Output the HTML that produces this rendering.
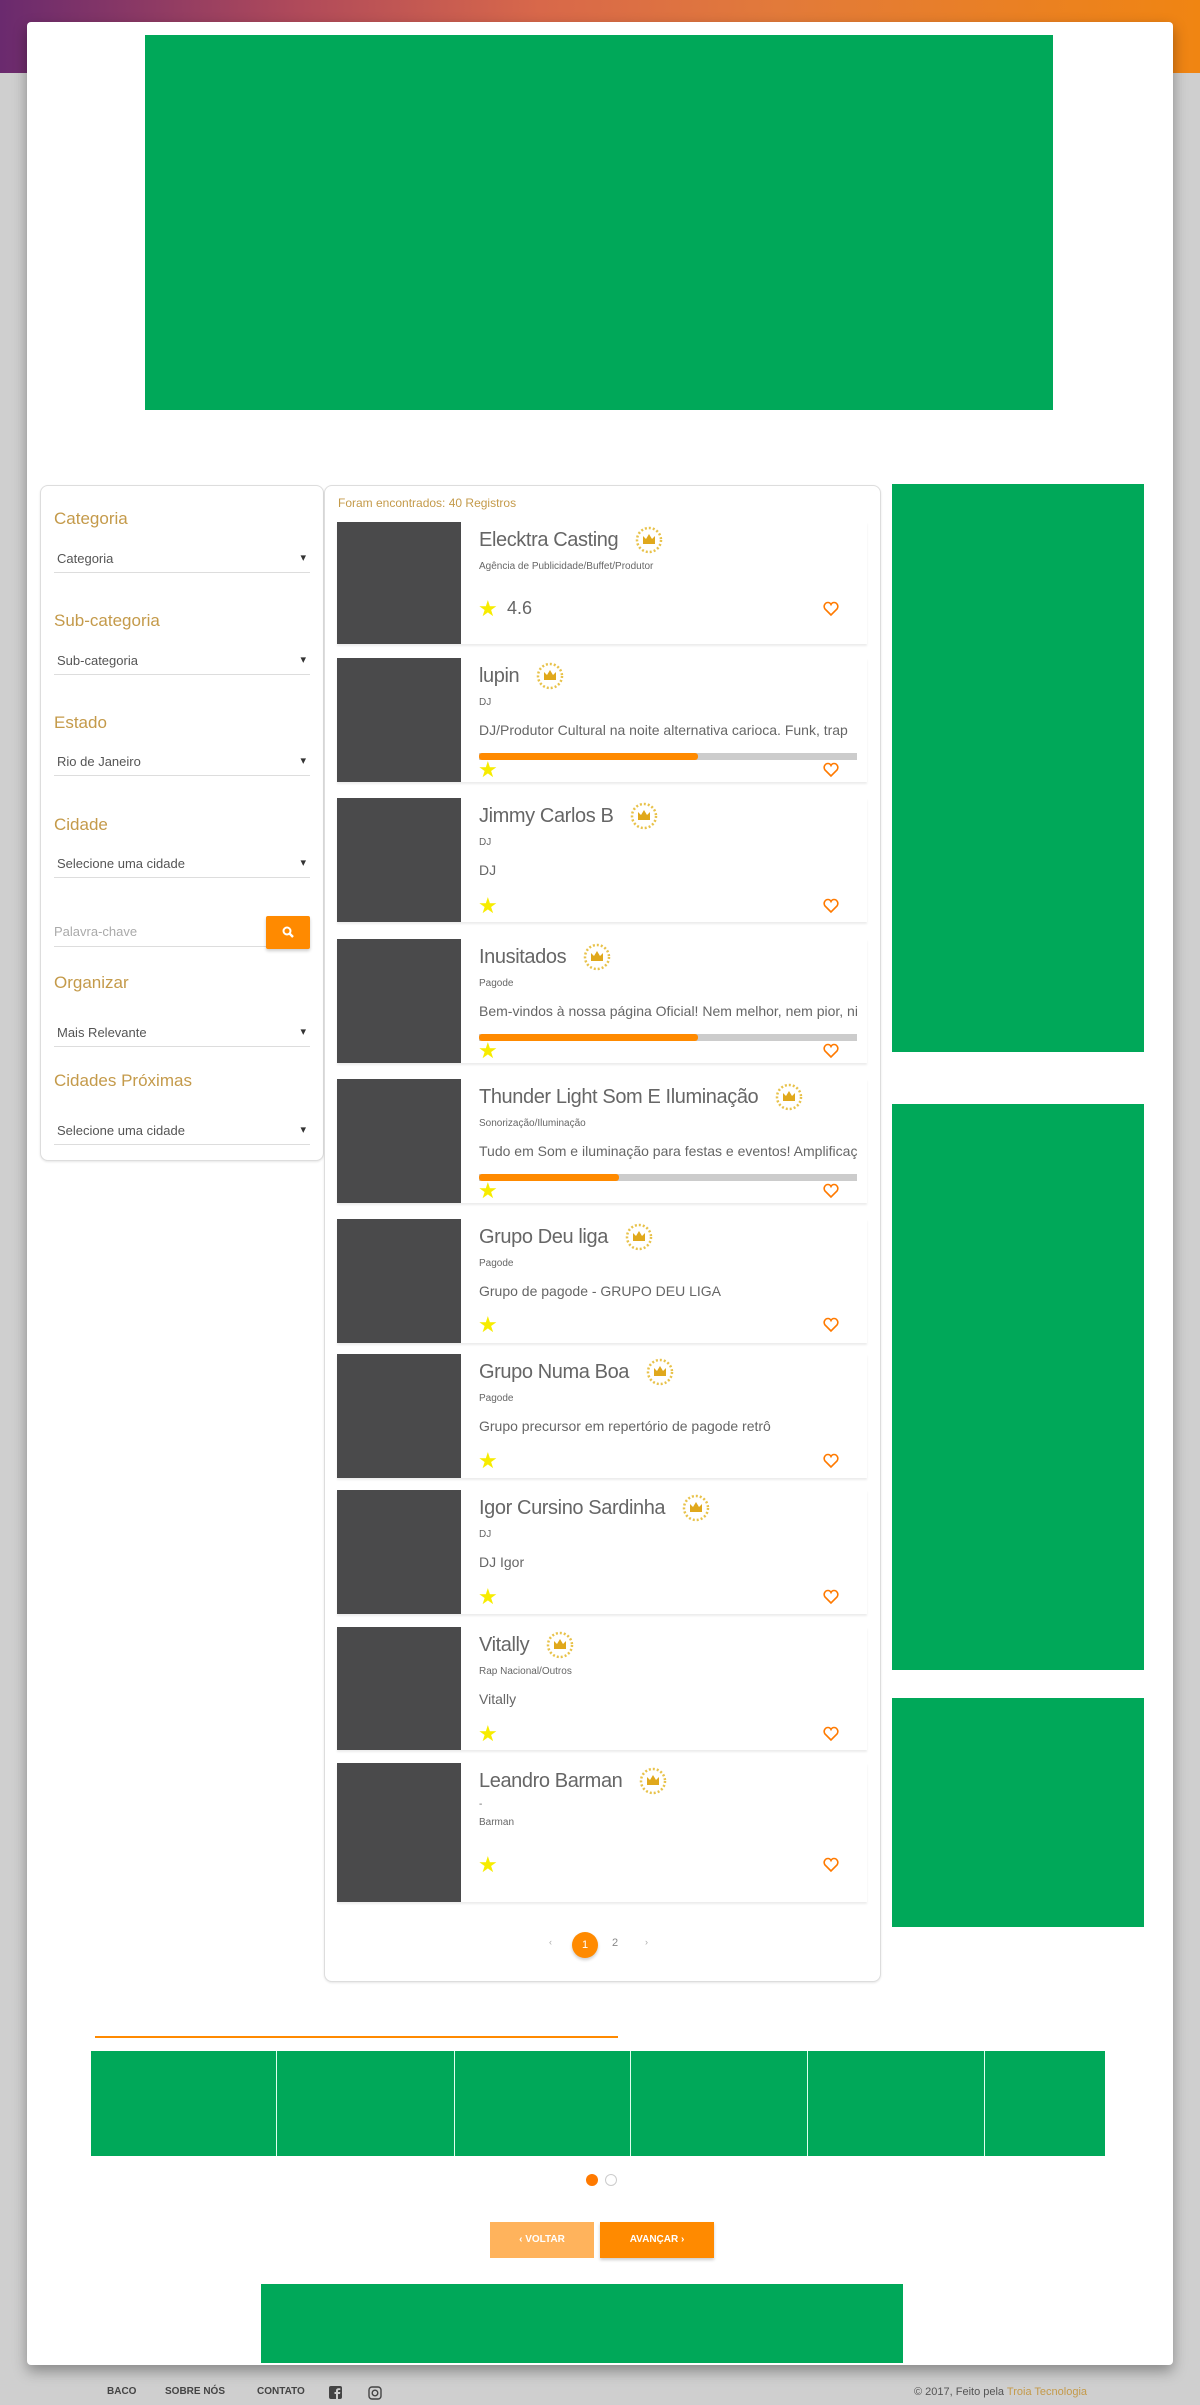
<!DOCTYPE html>
<html><head><meta charset="utf-8"><style>
*{margin:0;padding:0;box-sizing:border-box}
body{width:1200px;height:2405px;background:#cfcfcf;position:relative;font-family:"Liberation Sans",sans-serif;overflow:hidden}
.a{position:absolute}
.grad{left:0;top:0;width:1200px;height:73px;background:linear-gradient(90deg,#6a2a6e 0%,#b04a5a 25%,#d8684a 45%,#e27a3a 65%,#f08512 100%)}
.card{left:27px;top:22px;width:1146px;height:2343px;background:#fff;border-radius:4px;box-shadow:0 6px 14px rgba(0,0,0,.35)}
.green{background:#00a859}
.panel{background:#fff;border:1px solid #ddd;border-radius:8px;box-shadow:0 1px 2px rgba(0,0,0,.1)}
.lbl{color:#c49a4a;font-size:17px;left:54px}
.sel{left:54px;width:256px;height:22px;border-bottom:1px solid #ddd;font-size:13px;color:#555;padding-left:3px}
.sel:after{content:"▾";position:absolute;right:4px;top:0;font-size:11px;color:#333}
.item{left:337px;width:530px;background:#fff;box-shadow:0 2px 2px rgba(0,0,0,.08)}
.img{left:0;top:0;width:124px;background:#4a4a4b}
.t{left:142px;font-size:20px;letter-spacing:-0.4px;color:#666;white-space:nowrap;line-height:30px;display:flex;align-items:center}
.t svg{margin-left:16px;flex:none}
.s{left:142px;font-size:10px;color:#666}
.d{left:142px;font-size:14px;color:#666;white-space:nowrap;width:378px;overflow:hidden}
.bar{left:142px;width:378px;height:7px;background:#ccc}
.bar i{display:block;height:7px;background:#ff8a00;border-radius:3px}
.st{left:141px;color:#f7ec00;font-size:22px;line-height:1}
.ht{left:486px}
.foot{top:2386px;font-size:10px;font-weight:bold;color:#444}
</style></head><body>
<div class="a grad"></div>
<div class="a card"></div>
<div class="a green" style="left:145px;top:35px;width:908px;height:375px"></div>

<div class="a panel" style="left:40px;top:485px;width:284px;height:676px"></div>
<div class="a lbl" style="top:509px">Categoria</div>
<div class="a sel" style="top:551px">Categoria</div>
<div class="a lbl" style="top:611px">Sub-categoria</div>
<div class="a sel" style="top:653px">Sub-categoria</div>
<div class="a lbl" style="top:713px">Estado</div>
<div class="a sel" style="top:754px">Rio de Janeiro</div>
<div class="a lbl" style="top:815px">Cidade</div>
<div class="a sel" style="top:856px">Selecione uma cidade</div>
<div class="a" style="left:54px;top:924px;width:212px;height:23px;border-bottom:1px solid #ddd;font-size:13px;color:#aaa">Palavra-chave</div>
<div class="a" style="left:266px;top:916px;width:44px;height:33px;background:#ff8a00;border-radius:2px;box-shadow:0 2px 3px rgba(0,0,0,.2)">
<svg width="44" height="33" viewBox="0 0 44 33"><circle cx="21" cy="15" r="3.5" fill="none" stroke="#fff" stroke-width="2"/><path d="M23.5 17.5l3.5 3.5" stroke="#fff" stroke-width="2.4"/></svg></div>
<div class="a lbl" style="top:973px">Organizar</div>
<div class="a sel" style="top:1025px">Mais Relevante</div>
<div class="a lbl" style="top:1071px">Cidades Próximas</div>
<div class="a sel" style="top:1123px">Selecione uma cidade</div>

<div class="a panel" style="left:324px;top:485px;width:557px;height:1497px"></div>
<div class="a" style="left:338px;top:496px;font-size:12px;color:#c49a4a">Foram encontrados: 40 Registros</div>

<svg width="0" height="0" style="position:absolute"><defs>
<g id="crown"><circle cx="15" cy="15" r="12" fill="none" stroke="#e8c24a" stroke-width="2.5" stroke-dasharray="2 2"/><path d="M9 19 L9 11 L12 14 L15 9 L18 14 L21 11 L21 19Z" fill="#e0a81c"/></g>
<g id="heart"><path d="M8 14 L2 8 C0 5 2 1.5 5 1.5 C6.5 1.5 7.5 2.5 8 3.5 C8.5 2.5 9.5 1.5 11 1.5 C14 1.5 16 5 14 8 Z" fill="none" stroke="#ff7a00" stroke-width="1.6"/></g>
</defs></svg>

<div class="a item" style="top:522px;height:122px"><div class="a img" style="height:122px"></div>
<div class="a t" style="top:3px">Elecktra Casting<svg width="30" height="30"><use href="#crown"/></svg></div>
<div class="a s" style="top:39px">Agência de Publicidade/Buffet/Produtor</div>
<div class="a st" style="top:76px">★</div><div class="a" style="left:170px;top:76px;font-size:18px;color:#666">4.6</div>
<svg class="a ht" style="top:79px" width="16" height="16"><use href="#heart"/></svg></div>

<div class="a item" style="top:658px;height:124px"><div class="a img" style="height:124px"></div>
<div class="a t" style="top:3px">lupin<svg width="30" height="30"><use href="#crown"/></svg></div>
<div class="a s" style="top:39px">DJ</div>
<div class="a d" style="top:64px">DJ/Produtor Cultural na noite alternativa carioca. Funk, trap</div>
<div class="a bar" style="top:95px"><i style="width:58%"></i></div>
<div class="a st" style="top:101px">★</div><svg class="a ht" style="top:104px" width="16" height="16"><use href="#heart"/></svg></div>

<div class="a item" style="top:798px;height:124px"><div class="a img" style="height:124px"></div>
<div class="a t" style="top:3px">Jimmy Carlos B<svg width="30" height="30"><use href="#crown"/></svg></div>
<div class="a s" style="top:39px">DJ</div>
<div class="a d" style="top:64px">DJ</div>
<div class="a st" style="top:97px">★</div><svg class="a ht" style="top:100px" width="16" height="16"><use href="#heart"/></svg></div>

<div class="a item" style="top:939px;height:124px"><div class="a img" style="height:124px"></div>
<div class="a t" style="top:3px">Inusitados<svg width="30" height="30"><use href="#crown"/></svg></div>
<div class="a s" style="top:39px">Pagode</div>
<div class="a d" style="top:64px">Bem-vindos à nossa página Oficial! Nem melhor, nem pior, ninguém</div>
<div class="a bar" style="top:95px"><i style="width:58%"></i></div>
<div class="a st" style="top:101px">★</div><svg class="a ht" style="top:104px" width="16" height="16"><use href="#heart"/></svg></div>

<div class="a item" style="top:1079px;height:124px"><div class="a img" style="height:124px"></div>
<div class="a t" style="top:3px">Thunder Light Som E Iluminação<svg width="30" height="30"><use href="#crown"/></svg></div>
<div class="a s" style="top:39px">Sonorização/Iluminação</div>
<div class="a d" style="top:64px">Tudo em Som e iluminação para festas e eventos! Amplificação</div>
<div class="a bar" style="top:95px"><i style="width:37%"></i></div>
<div class="a st" style="top:101px">★</div><svg class="a ht" style="top:104px" width="16" height="16"><use href="#heart"/></svg></div>

<div class="a item" style="top:1219px;height:124px"><div class="a img" style="height:124px"></div>
<div class="a t" style="top:3px">Grupo Deu liga<svg width="30" height="30"><use href="#crown"/></svg></div>
<div class="a s" style="top:39px">Pagode</div>
<div class="a d" style="top:64px">Grupo de pagode - GRUPO DEU LIGA</div>
<div class="a st" style="top:95px">★</div><svg class="a ht" style="top:98px" width="16" height="16"><use href="#heart"/></svg></div>

<div class="a item" style="top:1354px;height:124px"><div class="a img" style="height:124px"></div>
<div class="a t" style="top:3px">Grupo Numa Boa<svg width="30" height="30"><use href="#crown"/></svg></div>
<div class="a s" style="top:39px">Pagode</div>
<div class="a d" style="top:64px">Grupo precursor em repertório de pagode retrô</div>
<div class="a st" style="top:96px">★</div><svg class="a ht" style="top:99px" width="16" height="16"><use href="#heart"/></svg></div>

<div class="a item" style="top:1490px;height:124px"><div class="a img" style="height:124px"></div>
<div class="a t" style="top:3px">Igor Cursino Sardinha<svg width="30" height="30"><use href="#crown"/></svg></div>
<div class="a s" style="top:39px">DJ</div>
<div class="a d" style="top:64px">DJ Igor</div>
<div class="a st" style="top:96px">★</div><svg class="a ht" style="top:99px" width="16" height="16"><use href="#heart"/></svg></div>

<div class="a item" style="top:1627px;height:123px"><div class="a img" style="height:123px"></div>
<div class="a t" style="top:3px">Vitally<svg width="30" height="30"><use href="#crown"/></svg></div>
<div class="a s" style="top:39px">Rap Nacional/Outros</div>
<div class="a d" style="top:64px">Vitally</div>
<div class="a st" style="top:96px">★</div><svg class="a ht" style="top:99px" width="16" height="16"><use href="#heart"/></svg></div>

<div class="a item" style="top:1763px;height:139px"><div class="a img" style="height:139px"></div>
<div class="a t" style="top:3px">Leandro Barman<svg width="30" height="30"><use href="#crown"/></svg></div>
<div class="a s" style="top:36px">-</div>
<div class="a s" style="top:54px">Barman</div>
<div class="a st" style="top:91px">★</div><svg class="a ht" style="top:94px" width="16" height="16"><use href="#heart"/></svg></div>

<div class="a" style="left:549px;top:1937px;font-size:9px;color:#aaa">‹</div>
<div class="a" style="left:572px;top:1932px;width:26px;height:26px;border-radius:13px;background:#ff8a00;color:#fff;font-size:11px;text-align:center;line-height:26px;box-shadow:0 2px 3px rgba(0,0,0,.2)">1</div>
<div class="a" style="left:612px;top:1937px;font-size:11px;color:#888">2</div>
<div class="a" style="left:645px;top:1937px;font-size:9px;color:#aaa">›</div>

<div class="a green" style="left:892px;top:484px;width:252px;height:568px"></div>
<div class="a green" style="left:892px;top:1104px;width:252px;height:566px"></div>
<div class="a green" style="left:892px;top:1698px;width:252px;height:229px"></div>

<div class="a" style="left:95px;top:2036px;width:523px;height:2px;background:#ff8a00"></div>
<div class="a green" style="left:91px;top:2051px;width:1014px;height:105px"></div>
<div class="a" style="left:276px;top:2051px;width:1px;height:105px;background:#dfe"></div>
<div class="a" style="left:454px;top:2051px;width:1px;height:105px;background:#dfe"></div>
<div class="a" style="left:630px;top:2051px;width:1px;height:105px;background:#dfe"></div>
<div class="a" style="left:807px;top:2051px;width:1px;height:105px;background:#dfe"></div>
<div class="a" style="left:984px;top:2051px;width:1px;height:105px;background:#dfe"></div>
<div class="a" style="left:586px;top:2174px;width:12px;height:12px;border-radius:6px;background:#ff7a00"></div>
<div class="a" style="left:605px;top:2174px;width:12px;height:12px;border-radius:6px;border:1px solid #ccc"></div>

<div class="a" style="left:490px;top:2222px;width:104px;height:36px;background:#ffb35c;color:#fff;font-size:10px;font-weight:bold;text-align:center;line-height:36px">‹ VOLTAR</div>
<div class="a" style="left:600px;top:2222px;width:114px;height:36px;background:#ff8a00;color:#fff;font-size:10px;font-weight:bold;text-align:center;line-height:36px;box-shadow:0 2px 3px rgba(0,0,0,.2)">AVANÇAR ›</div>

<div class="a green" style="left:261px;top:2284px;width:642px;height:79px"></div>

<div class="a foot" style="left:107px">BACO</div>
<div class="a foot" style="left:165px">SOBRE NÓS</div>
<div class="a foot" style="left:257px">CONTATO</div>
<svg class="a" style="left:329px;top:2386px" width="14" height="14"><rect x="0" y="0" width="13" height="13" rx="2" fill="#444"/><path d="M9 13V8h2l.3-2H9V5c0-.6.2-1 1-1h1.3V2.2H9.6C8 2.2 7 3 7 4.8V6H5.5v2H7v5z" fill="#cfcfcf"/></svg>
<svg class="a" style="left:368px;top:2386px" width="15" height="15"><rect x="1" y="1" width="12" height="12" rx="3" fill="none" stroke="#444" stroke-width="1.4"/><circle cx="7" cy="7" r="2.8" fill="none" stroke="#444" stroke-width="1.4"/></svg>
<div class="a" style="left:914px;top:2386px;font-size:11px;color:#555">© 2017, Feito pela <span style="color:#c49a4a">Troia Tecnologia</span></div>
</body></html>
